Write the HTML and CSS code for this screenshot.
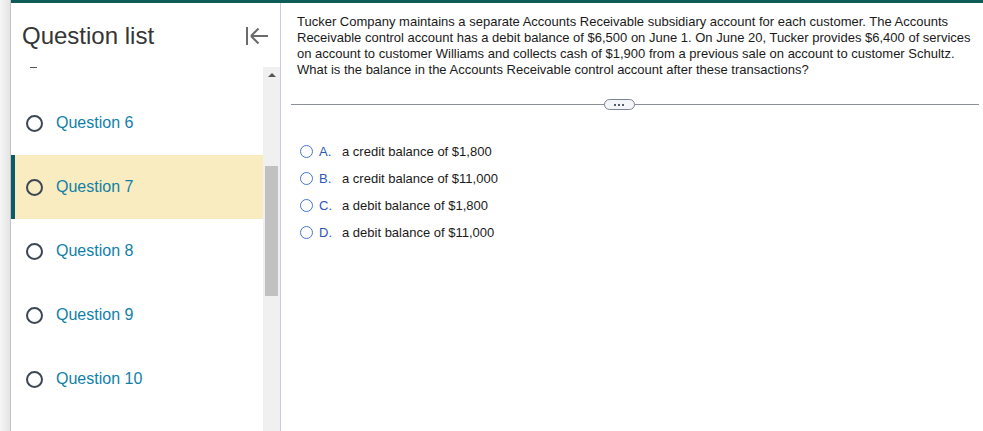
FILE: index.html
```html
<!DOCTYPE html>
<html>
<head>
<meta charset="utf-8">
<link rel="stylesheet" href="styles.css">
</head>
<body>
<div class="shadow"></div>
<div class="app">
  <aside class="sidebar">
    <div class="sidebar-head">
      <h1 class="title">Question list</h1>
      <svg class="collapse" width="24" height="20" viewBox="0 0 24 20"><path d="M2 1v18M6 10h17M6 10l7.5-7.5M6 10l7.5 7.5" stroke="#6b6b6b" stroke-width="2" fill="none"/></svg>
    </div>
    <div class="sidebar-body">
      <div class="list">
        <div class="clip"><span class="dash"></span></div>
        <div class="item"><span class="radio"></span><span class="label">Question 6</span></div>
        <div class="item current"><span class="radio"></span><span class="label">Question 7</span></div>
        <div class="item"><span class="radio"></span><span class="label">Question 8</span></div>
        <div class="item"><span class="radio"></span><span class="label">Question 9</span></div>
        <div class="item"><span class="radio"></span><span class="label">Question 10</span></div>
      </div>
      <div class="scrollbar">
        <div class="arrow"></div>
        <div class="thumb"></div>
      </div>
    </div>
  </aside>
  <main class="main">
    <p class="question">Tucker Company maintains a separate Accounts Receivable subsidiary account for each customer. The Accounts Receivable control account has a debit balance of $6,500 on June 1. On June 20, Tucker provides $6,400 of services on account to customer Williams and collects cash of $1,900 from a previous sale on account to customer Schultz. What is the balance in the Accounts Receivable control account after these transactions?</p>
    <div class="divider"><span class="pill"><i></i><i></i><i></i></span></div>
    <ul class="options">
      <li><span class="oradio"></span><span class="letter">A.</span><span>a credit balance of $1,800</span></li>
      <li><span class="oradio"></span><span class="letter">B.</span><span>a credit balance of $11,000</span></li>
      <li><span class="oradio"></span><span class="letter">C.</span><span>a debit balance of $1,800</span></li>
      <li><span class="oradio"></span><span class="letter">D.</span><span>a debit balance of $11,000</span></li>
    </ul>
  </main>
</div>
</body>
</html>
```
FILE: styles.css
```css
* { box-sizing: border-box; }
html, body { margin: 0; padding: 0; }
body {
  display: flex;
  width: 983px;
  height: 431px;
  overflow: hidden;
  background: #fff;
  font-family: "Liberation Sans", Arial, sans-serif;
}
.shadow {
  width: 11px;
  flex: none;
  background: linear-gradient(to right, #f6f6f6, #e4e4e4);
  border-right: 1px solid #c4c4c4;
}
.app {
  flex: 1;
  display: flex;
  border-top: 3px solid #0d5c58;
}
.sidebar {
  width: 270px;
  flex: none;
  display: flex;
  flex-direction: column;
  border-right: 1px solid #c9cdd8;
}
.sidebar-head {
  height: 64px;
  flex: none;
  display: flex;
  align-items: center;
  justify-content: space-between;
  padding: 0 11px 0 11px;
}
.title {
  margin: 0;
  font-size: 24px;
  font-weight: normal;
  color: #353535;
  position: relative;
  top: 1px;
}
.collapse { position: relative; top: 1px; }
.sidebar-body {
  flex: 1;
  display: flex;
  overflow: hidden;
}
.list {
  flex: 1;
}
.clip {
  height: 24px;
  padding-left: 19px;
}
.dash {
  display: block;
  width: 7px;
  height: 1px;
  background: #555;
}
.item {
  height: 64px;
  display: flex;
  align-items: center;
  padding-left: 11px;
  border-left: 4px solid transparent;
}
.item.current {
  background: #f9ecc0;
  border-left-color: #0a5a6c;
}
.radio {
  width: 17px;
  height: 17px;
  border: 2px solid #3d4654;
  border-radius: 50%;
  flex: none;
}
.label {
  margin-left: 13px;
  font-size: 16px;
  color: #127fa6;
}
.scrollbar {
  width: 17px;
  flex: none;
  background: #f0f0f0;
  padding: 0 2px;
}
.arrow {
  width: 0;
  height: 0;
  margin: 6px auto 0;
  border-left: 4px solid transparent;
  border-right: 4px solid transparent;
  border-bottom: 4px solid #555;
}
.thumb {
  margin-top: 89px;
  height: 130px;
  background: #c1c1c1;
}
.main {
  flex: 1;
  padding: 11px 4px 0 10px;
}
.question {
  margin: 0 0 0 6px;
  font-size: 13px;
  line-height: 16px;
  color: #1a1a1a;
}
.divider {
  margin-top: 21px;
  height: 11px;
  display: flex;
  align-items: center;
  justify-content: center;
  background: linear-gradient(#8a8f98, #8a8f98) center / 100% 1px no-repeat;
  padding-right: 32px;
}
.pill {
  width: 31px;
  height: 11px;
  border: 1px solid #7c8391;
  border-radius: 6px;
  background: #f4f5f8;
  display: flex;
  align-items: center;
  justify-content: center;
  gap: 2px;
}
.pill i {
  width: 2px;
  height: 2px;
  background: #555d6b;
}
.options {
  list-style: none;
  margin: 28px 0 0 0;
  padding: 0 0 0 9px;
}
.options li {
  height: 27px;
  display: flex;
  align-items: center;
  font-size: 13px;
  color: #1a1a1a;
}
.oradio {
  width: 13px;
  height: 13px;
  border: 1.5px solid #4676d0;
  border-radius: 50%;
  flex: none;
}
.letter {
  margin-left: 6px;
  width: 23px;
  color: #2c56b9;
}
```
